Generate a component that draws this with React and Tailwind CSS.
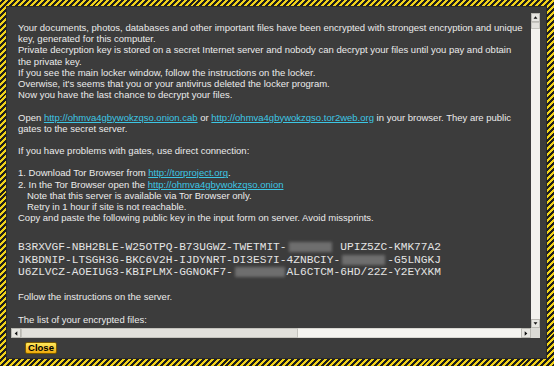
import React from 'react';

const Link = ({ children }) => (
    <span className="text-[#3cc6e4] underline">{children}</span>
);

const Line = ({ children, className = '' }) => (
    <div className={`h-[11.2px] leading-[11.2px] whitespace-nowrap ${className}`}>{children}</div>
);

const Blur = ({ children }) => (
    <span className="relative text-transparent">
        {children}
        <span className="absolute inset-x-[2px] inset-y-[1px] bg-[#6e6e6e] blur-[1.5px]" />
    </span>
);

const Arrow = ({ dir }) => {
    const pts = {
        up: '2,6 4.5,3 7,6',
        down: '2,3 4.5,6 7,3',
        left: '6,2 3,4.5 6,7',
        right: '3,2 6,4.5 3,7',
    }[dir];
    return (
        <svg width="9" height="9" viewBox="0 0 9 9">
            <polygon points={pts} fill="#111" />
        </svg>
    );
};

const Btn = ({ dir, className = '' }) => (
    <div className={`flex items-center justify-center bg-[#e6e5e0] border border-[#b9b8b2] ${className}`}>
        <Arrow dir={dir} />
    </div>
);

export default function App() {
    return (
        <div className="w-[554px] h-[366px] pl-[6px] pt-[6px] pr-[7px] pb-[7px] bg-[repeating-linear-gradient(135deg,#f1d21a_0px,#f1d21a_2.1px,#1e1e1e_2.1px,#1e1e1e_4.2px)]">
            <div className="w-full h-full bg-[#3c3c3c] flex flex-col pl-[4px] pt-[6px] pr-[6px] border border-[#2a2a2a]">
                <div className="flex h-[315px]">
                    <div className="flex-1 overflow-hidden pl-[7px] pt-[9px] text-[#ebebeb] text-[9.5px] font-['Liberation_Sans',Arial,sans-serif]">
                        <Line>Your documents, photos, databases and other important files have been encrypted with strongest encryption and unique</Line>
                        <Line>key, generated for this computer.</Line>
                        <Line>Private decryption key is stored on a secret Internet server and nobody can decrypt your files until you pay and obtain</Line>
                        <Line>the private key.</Line>
                        <Line>If you see the main locker window, follow the instructions on the locker.</Line>
                        <Line>Overwise, it's seems that you or your antivirus deleted the locker program.</Line>
                        <Line>Now you have the last chance to decrypt your files.</Line>
                        <Line />
                        <Line>Open <Link>http://ohmva4gbywokzqso.onion.cab</Link> or <Link>http://ohmva4gbywokzqso.tor2web.org</Link> in your browser. They are public</Line>
                        <Line>gates to the secret server.</Line>
                        <Line />
                        <Line>If you have problems with gates, use direct connection:</Line>
                        <Line />
                        <Line>1. Download Tor Browser from <Link>http://torproject.org</Link>.</Line>
                        <Line>2. In the Tor Browser open the <Link>http://ohmva4gbywokzqso.onion</Link></Line>
                        <Line className="pl-[9px]">Note that this server is available via Tor Browser only.</Line>
                        <Line className="pl-[9px]">Retry in 1 hour if site is not reachable.</Line>
                        <Line>Copy and paste the following public key in the input form on server. Avoid missprints.</Line>
                        <div className="h-[18px]" />
                        <div className="font-['Liberation_Mono','Courier_New',monospace] text-[11.2px] leading-[12.5px] text-[#e4e4e4] whitespace-pre">
                            <div>B3RXVGF-NBH2BLE-W25OTPQ-B73UGWZ-TWETMIT-<Blur>XXXXXXX</Blur> UPIZ5ZC-KMK77A2</div>
                            <div>JKBDNIP-LTSGH3G-BKC6V2H-IJDYNRT-DI3ES7I-4ZNBCIY-<Blur>XXXXXXX</Blur>-G5LNGKJ</div>
                            <div>U6ZLVCZ-AOEIUG3-KBIPLMX-GGNOKF7-<Blur>XXXXXXXX</Blur>AL6CTCM-6HD/22Z-Y2EYXKM</div>
                        </div>
                        <div className="h-[12.5px]" />
                        <Line>Follow the instructions on the server.</Line>
                        <Line />
                        <Line>The list of your encrypted files:</Line>
                    </div>
                    <div className="w-[9px] flex flex-col bg-[#f3f2ee]">
                        <Btn dir="up" className="h-[9px]" />
                        <div className="h-[7px] bg-[#e2e1dc] border border-[#c4c3bd]" />
                        <div className="flex-1" />
                        <Btn dir="down" className="h-[9px]" />
                    </div>
                </div>
                <div className="flex h-[10px]">
                    <Btn dir="left" className="w-[10px]" />
                    <div className="w-[277px] bg-[#e2e1dc] border border-[#c4c3bd]" />
                    <div className="flex-1 bg-[#f5f4f0] border-y border-[#d8d7d2]" />
                    <Btn dir="right" className="w-[10px]" />
                    <div className="w-[9px] bg-[#dcdbd6]" />
                </div>
                <div className="pl-[14px] pt-[4px]">
                    <button className="w-[32px] h-[12px] rounded-[2px] border border-[#7a5a00] bg-gradient-to-b from-[#ffe95a] to-[#eeaa00] text-black text-[9.5px] leading-[10px] font-bold font-['Liberation_Sans',Arial,sans-serif] flex items-center justify-center">
                        Close
                    </button>
                </div>
            </div>
        </div>
    );
}
